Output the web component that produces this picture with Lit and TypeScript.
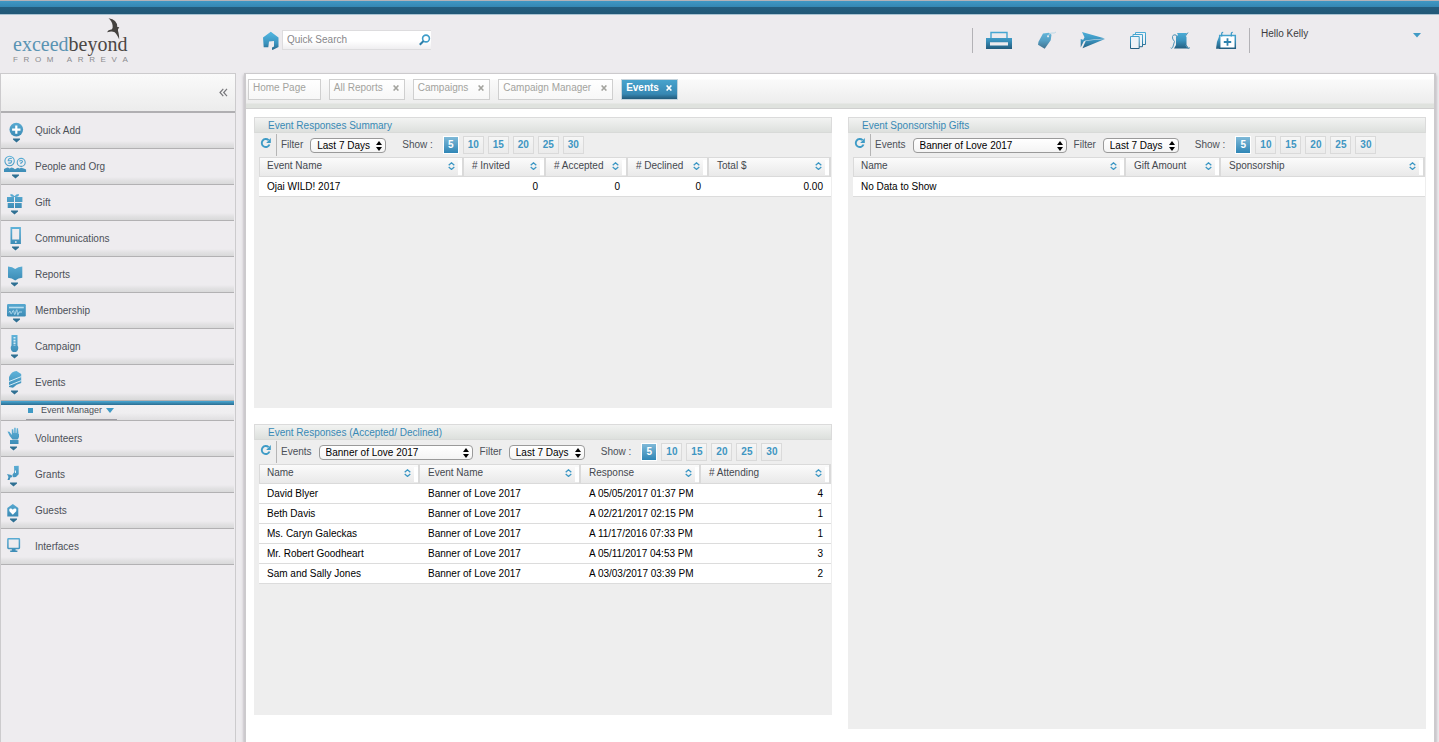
import { LitElement, html, css, svg, nothing, TemplateResult } from "lit";
import { customElement, property } from "lit/decorators.js";
import { classMap } from "lit/directives/class-map.js";
import { styleMap } from "lit/directives/style-map.js";

const base = css`
  * { box-sizing: border-box; }
  button, select, input {
    font: inherit;
    color: inherit;
    margin: 0;
    padding: 0;
    border: 0;
    background: none;
  }
  button { cursor: pointer; }
  svg { display: block; }
`;

const gradients = svg`<defs>
  <linearGradient id="g" gradientUnits="userSpaceOnUse" x1="0" y1="3" x2="0" y2="22">
    <stop offset="0" stop-color="#4fb2dc"/><stop offset="0.5" stop-color="#3a92bd"/><stop offset="1" stop-color="#1f5474"/>
  </linearGradient>
  <linearGradient id="s" gradientUnits="userSpaceOnUse" x1="0" y1="6" x2="0" y2="24">
    <stop offset="0" stop-color="#60b3da"/><stop offset="1" stop-color="#3b8ab4"/>
  </linearGradient>
</defs>`;

/* ---------- side menu ---------- */

const sideIcons: Record<string, TemplateResult> = {
  add: svg`<circle cx="15.3" cy="16.6" r="6.8" fill="url(#s)"/><path d="M15.3 12.4v8.4M11.1 16.6h8.4" stroke="#fff" stroke-width="2.2"/>`,
  people: svg`<g fill="none" stroke="url(#s)" stroke-width="1.1"><circle cx="8.6" cy="12" r="4.7"/><circle cx="20.2" cy="13.4" r="4"/>
    <path d="M10.8 9.5q-3.6-.6-3.6 2.2h3.400q.4 2.800-3.300 2.400M18.300 12.300q2-1.500 3.300 0-.2 1.500-1.700 1.600v1"/></g>
    <path fill="url(#s)" d="M3 23v-3q2.500-1.800 4-1.500l1.700 1 1.700-1q2 0 3.600 1.700 2-1.500 3-1.500l1.500.9 1.600-.9q3 .7 5 1.800V23z"/>`,
  gift: svg`<path fill="url(#s)" d="M6 12h7v5H6zM14 12h7.400v5H14zM6.700 18H13v5H6.700zM14 18h6.700v5H14zM13 12q-4.500 0-3.500-3 2.500 0 4 2.200Q15 9 17.800 9q.8 3-3.800 3z"/>`,
  phone: svg`<path fill="url(#s)" fill-rule="evenodd" d="M9.500 6h10.400v17H9.500zM11.200 8v10.400h7V8zM14 20.200h1.600v1.500H14z"/>`,
  book: svg`<path fill="url(#s)" d="M7 9.500q4.500.2 7.200 2.400Q17 9.700 21.300 9.500v11.300q-4 .1-7.100 2.700Q11 20.900 7 20.800z"/>`,
  card: svg`<rect x="6" y="11" width="18.800" height="12.500" rx="1.200" fill="url(#s)"/><path d="M8 14.500h14.800" stroke="#b8ddef" stroke-width="1.600"/><path d="M8 19.500q1-3 1.500 0t1.800-.5 1.800.7 1.700-.7 1.500.6 1.700-.6h3" fill="none" stroke="#b8ddef" stroke-width=".9"/>`,
  thermo: svg`<path fill="url(#s)" d="M10.500 6h6v10.500q1 1 .8 2.700-.6 3.900-3.800 3.900t-3.800-3.900q-.2-1.700.8-2.700z"/><path d="M13.500 8v9" stroke="#d6ecf6" stroke-width="2" stroke-dasharray="1.600 1.200"/>`,
  ticket: svg`<path fill="url(#s)" d="M8 12q2.500-6 7.500-6l4.700 3v9q-5 1-8.200 4.700L8 22z"/><path d="M8 16.500l12.500-5M8 20.500l12.500-5" stroke="#d6ecf6" stroke-width="1"/>`,
  hand: svg`<path fill="url(#s)" d="M6.500 10.500l2 .2 2.300 3.300V8.300h1.500l.3 3.700h.6V6.800h1.500V12h.7l.3-4.700h1.400V13h.5l.3-3.700H18v6.500q-.5 2-1.500 2.700h-5Q8.500 15.500 6.500 10.500z"/><path fill="url(#s)" d="M9 19h8.500v4H9z"/>`,
  grant: svg`<path fill="url(#s)" d="M13 9l4.700-.3v8.500q-2.500 3.500-5.400 3l-1-2.200 2-3zM6 17l4.500 1 1 2-2 .5-1 2.500H6.500l1-3z"/><path d="M14.500 16v-2.500" stroke="#e4f2f9"/>`,
  guest: svg`<path fill="url(#s)" d="M6.300 15l5.500-4 5.500 4v8.500h-11z"/><path fill="#fff" d="M11.800 21.800l-3.400-3.600q-.8-2 .8-2.700 1.700-.3 2.600 1.200.9-1.500 2.600-1.200 1.600.7.800 2.700z"/>`,
  screen: svg`<rect x="6.900" y="9.800" width="11.500" height="9.600" rx=".6" fill="none" stroke="url(#s)" stroke-width="1.500"/><path fill="url(#s)" d="M10.800 20h3.800v1.500h1.800V23H9.200v-1.500h1.600z"/>`,
};

interface MenuItem { label: string; icon: string; arrow?: number; child?: string; }

const menu: MenuItem[] = [
  { label: "Quick Add", icon: "add", arrow: 15 },
  { label: "People and Org", icon: "people", arrow: 14 },
  { label: "Gift", icon: "gift", arrow: 13 },
  { label: "Communications", icon: "phone", arrow: 14 },
  { label: "Reports", icon: "book", arrow: 13 },
  { label: "Membership", icon: "card", arrow: 15 },
  { label: "Campaign", icon: "thermo", arrow: 13 },
  { label: "Events", icon: "ticket", arrow: 13, child: "Event Manager" },
  { label: "Volunteers", icon: "hand", arrow: 12 },
  { label: "Grants", icon: "grant", arrow: 12 },
  { label: "Guests", icon: "guest", arrow: 12 },
  { label: "Interfaces", icon: "screen" },
];

@customElement("side-menu")
class SideMenu extends LitElement {
  static styles = [base, css`
    :host {
      display: block;
      width: 236px;
      flex: none;
      border: 1px solid #cccbcd;
      border-width: 1px 1px 0;
      background: #eeecef;
      color: #4c5058;
    }
    .top {
      height: 39px;
      border-bottom: 2px solid #b0afb2;
      background: linear-gradient(#fafafa, #ececec);
      display: flex;
      align-items: center;
      justify-content: flex-end;
      padding-right: 7px;
    }
    .fold { width: 9px; height: 9px; }
    ul { list-style: none; margin: 0; padding: 0 1px 0 0; }
    .item {
      display: flex;
      align-items: center;
      width: 100%;
      height: 36px;
      gap: 4px;
      text-align: left;
      border-bottom: 1px solid #b2b1b3;
      background: linear-gradient(#eeecef 28px, #e3e2e4 31px, #d9d9da 35px);
    }
    .item svg { width: 30px; height: 35px; flex: none; }
    .sub {
      height: 20px;
      border-bottom: 1px solid #b2b1b3;
      background: linear-gradient(#49a8d4, #2c6d91 4px, #f1f0f2 4px, #efeef0 12px, #e0dfe1);
      padding: 4px 0 0 25px;
    }
    .link {
      display: inline-flex;
      align-items: center;
      gap: 4px;
      height: 15px;
      padding: 0 3px 4px 2px;
      border-bottom: 1px solid #9d9ca3;
      color: inherit;
      font-size: 9px;
      line-height: 11px;
      text-decoration: none;
      vertical-align: top;
    }
    .dot { width: 5px; height: 5px; background: #3f9ac5; margin-right: 4px; }
  `];

  render() {
    return html`
      <div class="top">
        <button class="fold" aria-label="Collapse menu">
          <svg width="9" height="9" viewBox="0 0 9 9" fill="none" stroke="#77777b" stroke-width="1.200"><path d="M4.300.8L1 4.500l3.300 3.700M8 .8L4.700 4.500 8 8.200"/></svg>
        </button>
      </div>
      <ul>${menu.map((m) => html`<li>
        <button class="item">
          <svg viewBox="0 0 30 35" aria-hidden="true">${gradients}${sideIcons[m.icon]}
            ${m.arrow ? svg`<path transform="translate(${m.arrow} 25.500)" d="M-3 0h7v1L.5 4-3 1z" fill="#2f7093"/>` : nothing}
          </svg>
          <span>${m.label}</span>
        </button>
        ${m.child ? html`<div class="sub"><a class="link" href="#"><span class="dot"></span>${m.child}
          <svg width="8" height="5" viewBox="0 0 8 5"><path d="M0 0h8L4 5z" fill="#3f9ac5"/></svg></a></div>` : nothing}
      </li>`)}</ul>`;
  }
}

/* ---------- data panels ---------- */

interface Column { label: string; size: number; right?: boolean; }

@customElement("data-panel")
class DataPanel extends LitElement {
  @property() heading = "";
  @property({ type: Boolean }) events = false;
  @property({ attribute: false }) columns: Column[] = [];
  @property({ attribute: false }) rows: string[][] = [];

  static styles = [base, css`
    :host { display: block; background: #eee; }
    h2 {
      margin: 0;
      height: 16px;
      padding-left: 13px;
      font-size: 10px;
      line-height: 16px;
      font-weight: 400;
      color: #3889b5;
      border: 1px solid #dbdbdb;
      border-bottom-color: #d8dad8;
      background: linear-gradient(#f2f3f2, #dde0dd);
    }
    .tools {
      display: flex;
      align-items: center;
      height: 24px;
      padding-left: 6px;
      color: #4c5058;
    }
    .refresh { width: 12px; height: 12px; margin-bottom: 4px; }
    .bar { width: 1px; height: 22px; background: #b5b5b5; margin: 0 4px; }
    .pick { display: grid; align-items: center; margin: 1px 7px 0; }
    .pick > * { grid-area: 1 / 1; }
    .pick svg { justify-self: end; margin-right: 4px; pointer-events: none; }
    select {
      appearance: none;
      width: 76px;
      height: 15px;
      padding-left: 6px;
      color: #000;
      border: 1px solid #9a9a9a;
      border-radius: 4px;
      background: linear-gradient(#fff, #f4f4f4);
    }
    .wide { width: 154px; }
    .sizes { display: flex; gap: 4px; margin-left: 10px; }
    .show { margin-left: 9px; }
    .size {
      width: 21px;
      height: 18px;
      font-weight: 700;
      color: #4096c2;
      border: 1px solid #dadada;
      background: linear-gradient(#f6f6f6, #ebebeb);
    }
    .size.on {
      width: 16px;
      color: #fff;
      border-color: #fff;
      background: linear-gradient(#7fb9d8, #2f86b6);
    }
    .wrap { padding: 0 1px 0 5px; }
    table { width: 100%; table-layout: fixed; border-collapse: separate; border-spacing: 0; background: #fff; }
    th {
      height: 20px;
      padding: 0 0 0 8px;
      font-weight: 400;
      text-align: left;
      color: #44484f;
      border: 1px solid #dadada;
      border-left: 0;
      border-right-width: 2px;
      background: linear-gradient(#fbfbfb, #e9e9e9);
    }
    th:first-child { border-left: 1px solid #dadada; padding-left: 7px; }
    .cell { display: flex; align-items: flex-start; height: 18px; }
    .sort { display: flex; flex: 1; align-items: center; justify-content: space-between; padding: 2px 3px 0 0; }
    .grip { width: 4px; height: 15px; margin-top: 2px; background: #fff; }
    td { height: 20px; padding: 0 8px; color: #000; border-bottom: 1px solid #dcdcdc; white-space: nowrap; }
    .num { text-align: right; }
  `];

  private pick(name: string, value: string, wide: boolean) {
    return html`<label for=${name}>${name}</label>
      <span class="pick">
        <select id=${name} class=${classMap({ wide })}><option>${value}</option></select>
        <svg width="6" height="10" viewBox="0 0 6 10"><path d="M3 0l3 4H0zM3 10L0 6h6z"/></svg>
      </span>`;
  }

  render() {
    const total = this.columns.reduce((sum, c) => sum + c.size, 0);
    return html`
      <h2>${this.heading}</h2>
      <div class="tools">
        <button class="refresh" aria-label="Refresh">
          <svg width="12" height="12" viewBox="0 0 12 12"><path d="M8.600 3.200A4 4 0 1 0 9.500 7.500" fill="none" stroke="#3e9bc6" stroke-width="1.900"/><path d="M10.800 1v5H6.200z" fill="#3e9bc6"/></svg>
        </button>
        <span class="bar"></span>
        ${this.events ? this.pick("Events", "Banner of Love 2017", true) : nothing}
        ${this.pick("Filter", "Last 7 Days", false)}
        <span class="show">Show :</span>
        <div class="sizes">${[5, 10, 15, 20, 25, 30].map((n) => html`<button class=${classMap({ size: true, on: n === 5 })}>${n}</button>`)}</div>
      </div>
      <div class="wrap"><table>
        <colgroup>${this.columns.map((c) => html`<col style=${styleMap({ width: `${(c.size / total) * 100}%` })}>`)}</colgroup>
        <thead><tr>${this.columns.map((c) => html`<th><div class="cell">
          <button class="sort">${c.label}<svg width="7" height="8" viewBox="0 0 7 8" fill="none" stroke="#3c97c4" stroke-width="1.300"><path d="M.7 3.300L3.500.8l2.800 2.500M.7 4.900l2.800 2.500 2.800-2.500"/></svg></button>
          <span class="grip"></span></div></th>`)}</tr></thead>
        <tbody>${this.rows.map((r) => html`<tr>${r.map((v, i) => html`<td class=${classMap({ num: !!this.columns[i].right })}>${v}</td>`)}</tr>`)}</tbody>
      </table></div>`;
  }
}

/* ---------- page ---------- */

const tools: [string, TemplateResult][] = [
  ["Print", svg`<path d="M14 10V4.500h16V10" fill="none" stroke="#45a6d2" stroke-width="1.400"/><path fill="url(#g)" fill-rule="evenodd" d="M9 10h26v11H9zM13 14.200v3.300h18v-3.300z"/>`],
  ["Tags", svg`<path fill="url(#g)" fill-rule="evenodd" d="M21 5.500l6-.8 2.500 2-.8 5.500-6 8.500-6.700-4 .5-3zM26 7.300a1 1 0 1 0 .1 0z" opacity=".85"/><path d="M26.500 7.500q1-3 3.500-2.500t4-1" fill="none" stroke="#b5d6e5" stroke-width=".9"/>`],
  ["Send", svg`<path fill="url(#g)" d="M15 4l23 6.500-19 1.700-4 2 2.500-5zM13.700 11l3.600 1.200-3.600 7.300zM18.800 12.700L38 11l-22.500 9.300z"/>`],
  ["Copies", svg`<g fill="#eef3f7" stroke="url(#g)"><path d="M23.500 4.500h10v12h-10z"/><path d="M21 6.500h9.500v12.200H21z"/><path d="M18.500 8.500h8.700v12h-8.700z"/></g>`],
  ["Threads", svg`<path fill="url(#g)" d="M20 5h10l-1.500 2.500 1 1.500v8l2.500 3.500H17l2-3.500V9l2-2z"/><path d="M20.500 10l-1.500-3q-3-1-3.500 1.500t2 5l-1.800 6q-1.500 1.500-2 .3M28.500 17l2 3q1.500 1 2.500-.5M28.500 8l2.500-3.500" fill="none" stroke="#4d93b7" stroke-width="1"/>`],
  ["Calendar", svg`<path d="M17.700 7.500h15.600v12.700H17.700z" fill="#fff" stroke="url(#g)" stroke-width="1.500"/><path fill="url(#g)" d="M17.500 7.500v13.200H14l1-7z"/><path d="M19.700 8.500V6q0-2 1.500-1.500M29.300 8.500V6q0-2 1.500-1.500" fill="none" stroke="#3f9cc8" stroke-width="1.300"/><path d="M25.500 10.300v7.400M21.800 14h7.400" stroke="#2f83ae" stroke-width="1.800"/>`],
];

const tabs = ["Home Page", "All Reports", "Campaigns", "Campaign Manager", "Events"];

@customElement("app-root")
class AppRoot extends LitElement {
  static styles = [base, css`
    :host {
      display: flex;
      flex-direction: column;
      min-height: 100vh;
      background: #edebee;
      font: 10px/12px "Liberation Sans", Arial, sans-serif;
    }
    .stripe {
      height: 15px;
      border-top: 1px solid #b4b3b9;
      border-bottom: 1px solid #a9c3d2;
      background: linear-gradient(#3f97c3, #3587b3 6px, #235d7e 6px, #225877);
    }
    header { display: flex; align-items: flex-start; height: 58px; }
    .brand { width: 251px; padding: 3px 0 0 13px; }
    .brand svg { margin-left: 94px; }
    .name { font: 20px/20px "Liberation Serif", serif; color: #4b4744; margin-top: -6px; display: block; }
    .name span { color: #5a93b3; }
    .from { display: flex; justify-content: space-between; width: 115px; font-size: 8px; line-height: 10px; color: #8c8b8f; margin-top: 1px; }
    .from span:nth-child(5) { width: 2px; }
    .search { display: flex; align-items: center; padding: 15px 0 0 12px; gap: 3px; }
    .field {
      display: flex;
      align-items: center;
      width: 149px;
      height: 20px;
      border: 1px solid #dddcde;
      border-width: 1px 0 1px 1px;
      background: linear-gradient(#fff 10px, #efeef0);
    }
    input { flex: 1; min-width: 0; padding-left: 4px; outline: 0; }
    input::placeholder { color: #88878a; opacity: 1; }
    .tools { display: flex; margin: 13px 0 0 auto; padding: 0 2px 0 4px; border-left: 1px solid #b3b2b6; }
    .user {
      display: flex;
      justify-content: space-between;
      width: 190px;
      height: 25px;
      margin-top: 13px;
      padding: 0 18px 0 11px;
      border-left: 1px solid #b3b2b6;
      color: #3c3c3f;
    }
    .user svg { margin-top: 5px; }
    .body { display: flex; flex: 1; gap: 8px; }
    main {
      flex: 1;
      min-width: 0;
      margin-right: 3px;
      background: #fff;
      border: 1px solid #cccacd;
      border-width: 1px 2px 0;
      box-shadow: 0 2px 3px #a9a7ad;
    }
    .tabs {
      display: flex;
      gap: 8px;
      height: 35px;
      padding: 5px 2px 0;
      border-bottom: 1px solid #cfcfcf;
      background: linear-gradient(#fff 5px, #fafafa 6px, #ededed 29px, #dfe2de 30px, #dfe2de);
    }
    .tab {
      display: flex;
      gap: 10px;
      height: 21px;
      padding: 0 5px 3px 4px;
      border: 1px solid #cfcfcf;
      background: linear-gradient(#fff, #f7f7f7);
      color: #a3a39e;
    }
    .home { padding-right: 14px; }
    .active {
      gap: 7px;
      color: #fff;
      font-weight: 700;
      border-color: #c4d3dc;
      background: linear-gradient(#48a3cd, #3788b3 14px, #225a7a);
    }
    .close svg { width: 6px; height: 6px; }
    .content { display: grid; grid-template-columns: 1fr 1fr; gap: 16px; padding: 8px; align-items: start; }
    .stack { display: grid; gap: 16px; }
    .half { min-height: 291px; }
    .full { min-height: 612px; }
  `];

  render() {
    return html`
      <div class="stripe"></div>
      <header>
        <div class="brand">
          <svg width="14" height="22" viewBox="0 0 14 22"><path fill="#45423f" d="M1.500.3Q6 1 8 3q2.500 2.500 2.300 6l2 .3-1.300 2q-.3 1 .5 3.500.8 3.500.7 6.700-1-2.500-2-4-1-1.800-2.500-3.200-2-1-3.700-.8L0 14.300l1.600-2L5 11.200Q6 9.500 5.600 7.500 5 3 1.500.3z"/></svg>
          <span class="name"><span>exceed</span>beyond</span>
          <div class="from">${[..."FROM ARREVA"].map((c) => html`<span>${c}</span>`)}</div>
        </div>
        <form class="search">
          <button type="button" aria-label="Home"><svg width="16" height="19" viewBox="0 0 16 19">${gradients}<path fill="url(#g)" d="M0 6.500L7.800.8l7.700 5.700V16l-5 2.500-1.500.5v-2.500l2-1V10L6 10.500l-.7 5.800H.7z"/></svg></button>
          <div class="field"><input aria-label="Quick Search" placeholder="Quick Search">
            <button type="button" aria-label="Search"><svg width="12" height="12" viewBox="0 0 12 12" fill="none" stroke="#3f9dc9"><circle cx="7" cy="4.500" r="3.400" stroke-width="1.600"/><path d="M4.500 7L.8 10.800" stroke="#2c7ea9" stroke-width="2"/></svg></button>
          </div>
        </form>
        <div class="tools">${tools.map(([name, icon]) => html`<button aria-label=${name}><svg width="45" height="25" viewBox="0 0 45 25">${gradients}${icon}</svg></button>`)}</div>
        <button class="user"><span>Hello Kelly</span><svg width="8" height="5" viewBox="0 0 8 5"><path d="M0 0h8L4 4.500z" fill="#3f9ac5"/></svg></button>
      </header>
      <div class="body">
        <side-menu></side-menu>
        <main>
          <div class="tabs">${tabs.map((t) => html`<div class=${classMap({ tab: true, home: t === "Home Page", active: t === "Events" })}>
            <button>${t}</button>
            ${t === "Home Page" ? nothing : html`<button class="close" aria-label="Close ${t}"><svg viewBox="0 0 6 6" fill="none" stroke="currentColor" stroke-width="1.500"><path d="M.6.4l4.800 5.200M5.400.4L.6 5.600"/></svg></button>`}
          </div>`)}</div>
          <div class="content">
            <div class="stack">
              <data-panel class="half" heading="Event Responses Summary"
                .columns=${[
                  { label: "Event Name", size: 205 },
                  { label: "# Invited", size: 82, right: true },
                  { label: "# Accepted", size: 82, right: true },
                  { label: "# Declined", size: 81, right: true },
                  { label: "Total $", size: 122, right: true },
                ]}
                .rows=${[["Ojai WILD! 2017", "0", "0", "0", "0.00"]]}></data-panel>
              <data-panel class="half" events heading="Event Responses (Accepted/ Declined)"
                .columns=${[
                  { label: "Name", size: 161 },
                  { label: "Event Name", size: 161 },
                  { label: "Response", size: 120 },
                  { label: "# Attending", size: 130, right: true },
                ]}
                .rows=${[
                  ["David Blyer", "Banner of Love 2017", "A 05/05/2017 01:37 PM", "4"],
                  ["Beth Davis", "Banner of Love 2017", "A 02/21/2017 02:15 PM", "1"],
                  ["Ms. Caryn Galeckas", "Banner of Love 2017", "A 11/17/2016 07:33 PM", "1"],
                  ["Mr. Robert Goodheart", "Banner of Love 2017", "A 05/11/2017 04:53 PM", "3"],
                  ["Sam and Sally Jones", "Banner of Love 2017", "A 03/03/2017 03:39 PM", "2"],
                ]}></data-panel>
            </div>
            <data-panel class="full" events heading="Event Sponsorship Gifts"
              .columns=${[
                { label: "Name", size: 273 },
                { label: "Gift Amount", size: 95 },
                { label: "Sponsorship", size: 204 },
              ]}
              .rows=${[["No Data to Show", "", ""]]}></data-panel>
          </div>
        </main>
      </div>`;
  }
}
